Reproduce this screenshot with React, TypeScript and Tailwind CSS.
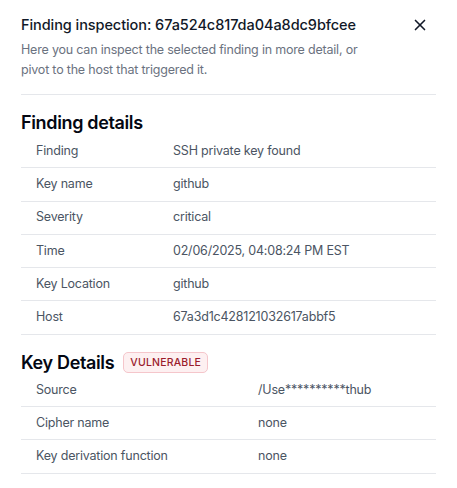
import { X } from 'lucide-react'

const FINDING_ROWS = [
  { label: 'Finding', value: 'SSH private key found' },
  { label: 'Key name', value: 'github' },
  { label: 'Severity', value: 'critical' },
  { label: 'Time', value: '02/06/2025, 04:08:24 PM EST' },
  { label: 'Key Location', value: 'github' },
  { label: 'Host', value: '67a3d1c428121032617abbf5' },
]

const KEY_ROWS = [
  { label: 'Source', value: '/Use**********thub' },
  { label: 'Cipher name', value: 'none' },
  { label: 'Key derivation function', value: 'none' },
]

function DetailRows({ rows, labelWidth }: { rows: { label: string; value: string }[]; labelWidth: string }) {
  return (
    <div className="flex flex-col">
      {rows.map((row) => (
        <div
          key={row.label}
          className="flex items-center h-[33.3px] border-b border-[#e5e7eb] pl-[15px] text-[12.5px] tracking-[-0.2px] text-[#4b5563]"
        >
          <div className={labelWidth}>{row.label}</div>
          <div>{row.value}</div>
        </div>
      ))}
    </div>
  )
}

export default function App() {
  return (
    <main
      className="min-h-screen bg-white px-[21px] pt-[15px]"
      style={{ fontFamily: 'Inter, "Noto Sans", sans-serif' }}
    >
      <div className="flex items-start justify-between">
        <h2 className="text-[14.5px] leading-[20px] tracking-[-0.07px] font-medium text-[#111827]">
          Finding inspection: 67a524c817da04a8dc9bfcee
        </h2>
        <button className="mr-[7px] mt-[1px] text-[#111827]" aria-label="Close">
          <X size={18} strokeWidth={2.2} />
        </button>
      </div>
      <p className="mt-[5px] pr-[70px] text-[12.5px] leading-[20px] tracking-[-0.2px] text-[#6b7280]">
        Here you can inspect the selected finding in more detail, or pivot to the host that triggered it.
      </p>
      <div className="mt-[14px] border-t border-[#e5e7eb]" />

      <h3 className="mt-[17px] mb-[1px] text-[18px] leading-[22px] tracking-[-0.35px] font-semibold text-[#030712]">
        Finding details
      </h3>
      <DetailRows rows={FINDING_ROWS} labelWidth="w-[137px]" />

      <div className="mt-[17px] flex items-center gap-[9px] h-[22px]">
        <h3 className="text-[18px] leading-[22px] tracking-[-0.35px] font-semibold text-[#030712]">Key Details</h3>
        <span className="rounded-[5px] border border-[#f5c6cb] bg-[#fdf0f1] px-[6px] py-[2px] text-[10.5px] leading-[15px] font-medium tracking-[0.2px] text-[#9b1c2c]">
          VULNERABLE
        </span>
      </div>
      <DetailRows rows={KEY_ROWS} labelWidth="w-[222px]" />
    </main>
  )
}
